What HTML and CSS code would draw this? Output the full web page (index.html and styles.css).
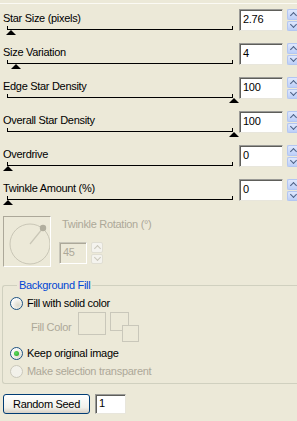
FILE: index.html
```html
<!DOCTYPE html>
<html lang="en">
<head>
  <meta charset="UTF-8">
  <title>Star Effect</title>
  <link rel="stylesheet" href="styles.css">
</head>
<body>
  <div class="topline"></div>

  <div class="sliders">
    <div class="slider-row">
      <div class="slider-main">
        <div class="label">Star Size (pixels)</div>
        <div class="track"><span class="thumb" style="left: -2px;"></span></div>
      </div>
      <div class="num">2.76</div>
      <div class="spin"><span class="up"></span><span class="down"></span></div>
    </div>
    <div class="slider-row">
      <div class="slider-main">
        <div class="label">Size Variation</div>
        <div class="track"><span class="thumb" style="left: 3px;"></span></div>
      </div>
      <div class="num">4</div>
      <div class="spin"><span class="up"></span><span class="down"></span></div>
    </div>
    <div class="slider-row">
      <div class="slider-main">
        <div class="label">Edge Star Density</div>
        <div class="track"><span class="thumb" style="left: 221px;"></span></div>
      </div>
      <div class="num">100</div>
      <div class="spin"><span class="up"></span><span class="down"></span></div>
    </div>
    <div class="slider-row">
      <div class="slider-main">
        <div class="label">Overall Star Density</div>
        <div class="track"><span class="thumb" style="left: 221px;"></span></div>
      </div>
      <div class="num">100</div>
      <div class="spin"><span class="up"></span><span class="down"></span></div>
    </div>
    <div class="slider-row">
      <div class="slider-main">
        <div class="label">Overdrive</div>
        <div class="track"><span class="thumb" style="left: -5px;"></span></div>
      </div>
      <div class="num">0</div>
      <div class="spin"><span class="up"></span><span class="down"></span></div>
    </div>
    <div class="slider-row">
      <div class="slider-main">
        <div class="label">Twinkle Amount (%)</div>
        <div class="track"><span class="thumb" style="left: -5px;"></span></div>
      </div>
      <div class="num">0</div>
      <div class="spin"><span class="up"></span><span class="down"></span></div>
    </div>
  </div>

  <div class="twinkle">
    <div class="dial">
      <svg width="46" height="49" viewBox="0 0 46 49">
        <circle cx="26" cy="27" r="20" fill="none" stroke="#c9c6b6" stroke-width="1"/>
        <line x1="26" y1="27" x2="39" y2="11" stroke="#c9c6b6" stroke-width="1.2"/>
        <circle cx="39" cy="11" r="3.2" fill="#b1ae9e"/>
      </svg>
    </div>
    <div class="twinkle-side">
      <div class="label disabled">Twinkle Rotation (°)</div>
      <div class="twinkle-input">
        <div class="num small disabled">45</div>
        <div class="spin disabled"><span class="up"></span><span class="down"></span></div>
      </div>
    </div>
  </div>

  <fieldset class="group">
    <legend>Background Fill</legend>
    <div class="radio-row">
      <span class="radio"></span>
      <span>Fill with solid color</span>
    </div>
    <div class="fill-row">
      <span class="disabled">Fill Color</span>
      <span class="swatch"></span>
      <span class="swap">
        <span class="sq one"></span>
        <span class="sq two"></span>
      </span>
    </div>
    <div class="radio-row">
      <span class="radio checked"></span>
      <span>Keep original image</span>
    </div>
    <div class="radio-row">
      <span class="radio off"></span>
      <span class="disabled">Make selection transparent</span>
    </div>
  </fieldset>

  <div class="seed-row">
    <button class="seed">Random Seed</button>
    <div class="num seed-num">1</div>
  </div>
</body>
</html>
```

FILE: styles.css
```css
body {
  margin: 0;
  width: 297px;
  height: 421px;
  overflow: hidden;
  background: #ece9d8;
  font-family: "Liberation Sans", Arial, sans-serif;
  font-size: 11px;
  letter-spacing: -0.3px;
  color: #000;
}

.topline {
  margin-top: 3px;
  height: 1px;
  background: #fbfaf4;
}

.sliders {
  margin-top: 4px;
}

.slider-row {
  display: flex;
  height: 34px;
}

.slider-main {
  width: 239px;
  flex: none;
}

.label {
  padding: 4px 0 0 3px;
  height: 13px;
  line-height: 13px;
  white-space: nowrap;
}

.track {
  position: relative;
  margin: 1px 0 0 7px;
  width: 226px;
  height: 4px;
  box-sizing: border-box;
  border: 1px solid #000;
  border-top: 0;
}

.thumb {
  position: absolute;
  top: 4px;
  width: 0;
  height: 0;
  border-left: 5px solid transparent;
  border-right: 5px solid transparent;
  border-bottom: 5px solid #000;
}

.num {
  flex: none;
  margin-top: 1px;
  width: 44px;
  height: 22px;
  box-sizing: border-box;
  padding-left: 3px;
  line-height: 18px;
  background: #fff;
  border: 1px solid;
  border-color: #9a9a96 #e8e6dc #e8e6dc #9a9a96;
  box-shadow: inset 1px 1px 0 #5e5e5a;
}

/* the spinners of the value boxes are cut by the right edge of the panel */
.spin {
  flex: none;
  display: flex;
  flex-direction: column;
  gap: 1px;
  margin: 1px 0 0 4px;
  width: 10px;
  height: 22px;
}

.spin span {
  flex: 1;
  border-radius: 2px 0 0 2px;
  border: 1px solid #b3c6f2;
  border-right: 0;
  background: linear-gradient(#dfe8fd, #bccff8) no-repeat;
  position: relative;
}

.spin span::after {
  content: "";
  position: absolute;
  left: 3px;
  width: 4px;
  height: 4px;
  border-left: 1.5px solid #4d6185;
  border-top: 1.5px solid #4d6185;
}

.spin .up::after {
  top: 3px;
  transform: rotate(45deg);
}

.spin .down::after {
  top: 0;
  transform: rotate(225deg);
}

.spin.disabled {
  width: 12px;
}

.spin.disabled span {
  border: 1px solid #e0ded3;
  border-radius: 2px;
  background: #f4f3ee;
}

.spin.disabled span::after {
  border-color: #c9c7ba;
}

.disabled {
  color: #aca899;
}

.twinkle {
  display: flex;
  margin-top: 4px;
}

.dial {
  margin-left: 3px;
  width: 48px;
  height: 51px;
  box-sizing: border-box;
  border: 1px solid;
  border-color: #aca899 #fff #fff #aca899;
}

.dial svg {
  display: block;
}

.twinkle-side {
  margin-left: 8px;
}

.twinkle-side .label {
  padding-top: 2px;
}

.twinkle-input {
  display: flex;
  margin-top: 10px;
}

.num.small {
  width: 28px;
  background: #ece9d8;
  border-color: #c9c7ba #fff #fff #c9c7ba;
  box-shadow: inset 1px 1px 0 #aca899;
}

.group {
  margin: 12px 0 0 2px;
  padding: 5px 0 5px 7px;
  border: 1px solid #d0d0bf;
  border-right: 0;
  border-radius: 3px 0 0 3px;
}

.group legend {
  margin-left: 7px;
  padding: 0 2px;
  line-height: 13px;
  color: #0046d5;
}

.radio-row {
  display: flex;
  align-items: center;
  gap: 4px;
  height: 13px;
  line-height: 13px;
  margin-top: 5px;
}

.radio-row:first-of-type {
  margin-top: 0;
}

.radio {
  position: relative;
  width: 13px;
  height: 13px;
  box-sizing: border-box;
  border-radius: 50%;
  border: 1px solid #1c5180;
  background: radial-gradient(circle at 65% 65%, #dcd9ca, #fff 75%);
}

.radio.checked::after {
  content: "";
  position: absolute;
  left: 3px;
  top: 3px;
  width: 5px;
  height: 5px;
  border-radius: 50%;
  background: radial-gradient(circle at 40% 40%, #5fdc5f, #21a121);
}

.radio.off {
  border-color: #cac8bb;
  background: #f2f1ea;
}

.fill-row {
  display: flex;
  align-items: center;
  margin: 2px 0 0 21px;
  height: 30px;
}

.swatch {
  margin-left: 7px;
  width: 28px;
  height: 23px;
  box-sizing: border-box;
  border: 1px solid #c9c7ba;
  align-self: flex-start;
}

.swap {
  position: relative;
  margin-left: 4px;
  width: 29px;
  height: 30px;
}

.sq {
  position: absolute;
  box-sizing: border-box;
  border: 1px solid #c9c7ba;
  background: #ece9d8;
}

.sq.one {
  left: 0;
  top: 0;
  width: 19px;
  height: 19px;
}

.sq.two {
  left: 12px;
  top: 13px;
  width: 17px;
  height: 17px;
}

.seed-row {
  display: flex;
  gap: 5px;
  margin: 10px 0 0 3px;
}

.seed {
  width: 87px;
  height: 20px;
  padding: 0;
  font: inherit;
  letter-spacing: inherit;
  color: #000;
  border: 1px solid #003c74;
  border-radius: 3px;
  background: linear-gradient(#fff, #f2f1ea 70%, #d6d0c5);
}

.num.seed-num {
  margin-top: 0;
  width: 31px;
  height: 20px;
  line-height: 16px;
}
```
